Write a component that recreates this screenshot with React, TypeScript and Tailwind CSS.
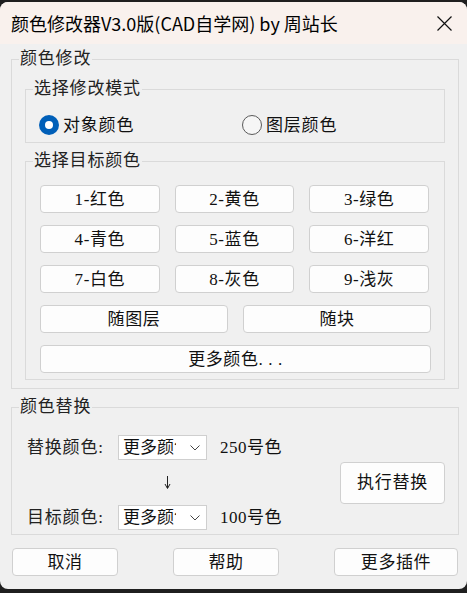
import React from 'react';

const body = "font-['Liberation_Serif','Noto_Sans_CJK_SC',serif]";

const Btn: React.FC<{ label: string; className?: string }> = ({ label, className = '' }) => (
  <button
    className={`h-[28px] rounded-[4px] border border-[#d0d0d0] bg-[#fdfdfd] text-[17px] leading-none tracking-[0.6px] text-[#111] ${className}`}
  >
    {label}
  </button>
);

const Radio: React.FC<{ checked?: boolean; label: string }> = ({ checked, label }) => (
  <label className="flex items-center gap-[4px] text-[17px] leading-none tracking-[0.8px] text-[#111]">
    {checked ? (
      <span className="flex h-[20px] w-[20px] items-center justify-center rounded-full bg-[#005fb8]">
        <span className="h-[8px] w-[8px] rounded-full bg-white" />
      </span>
    ) : (
      <span className="h-[20px] w-[20px] rounded-full border border-[#5a5a5a] bg-[#f6f6f6]" />
    )}
    {label}
  </label>
);

const Select: React.FC = () => (
  <div className="flex h-[25px] w-[89px] items-center border border-[#cfcfcf] bg-white pl-[4px]">
    <span className="w-[53px] overflow-hidden whitespace-nowrap text-[17px] leading-none text-[#111]">更多颜色</span>
    <svg width="10" height="6" viewBox="0 0 10 6" className="ml-[14px]">
      <path d="M0.5 0.5 L5 5 L9.5 0.5" fill="none" stroke="#444" strokeWidth="1" />
    </svg>
  </div>
);

const Legend: React.FC<{ text: string }> = ({ text }) => (
  <legend className="ml-[7px] px-[1px] text-[17px] leading-[22px] tracking-[0.8px] text-[#222]">{text}</legend>
);

export default function App() {
  const colors = ['1-红色', '2-黄色', '3-绿色', '4-青色', '5-蓝色', '6-洋红', '7-白色', '8-灰色', '9-浅灰'];
  return (
    <div className="h-[593px] w-[467px] bg-[#1f1f1f] pt-[2px] pb-[4px]">
      <div className={`flex h-full flex-col overflow-hidden rounded-[8px] bg-[#f0f0f0] ${body}`}>
        {/* title bar */}
        <div className="flex h-[42px] shrink-0 items-center justify-between bg-[#f9f1ed] pl-[11px] pr-[15px]">
          <span className="font-['Noto_Sans_CJK_SC',sans-serif] text-[18px] text-black">
            颜色修改器V3.0版(CAD自学网) by 周站长
          </span>
          <svg width="15" height="15" viewBox="0 0 15 15">
            <path d="M0.5 0.5 L14.5 14.5 M14.5 0.5 L0.5 14.5" stroke="#111" strokeWidth="1.2" />
          </svg>
        </div>

        <div className="flex flex-col pl-[11px] pr-[8px]">
          {/* 颜色修改 */}
          <fieldset className="mt-[4px] border border-[#dadada] pb-[8px]">
            <Legend text="颜色修改" />
            <div className="px-[13px]">
              <fieldset className="mt-[8px] border border-[#dadada]">
                <Legend text="选择修改模式" />
                <div className="mt-[13px] mb-[5px] flex h-[24px] items-center pl-[13px]">
                  <div className="w-[203px]">
                    <Radio checked label="对象颜色" />
                  </div>
                  <Radio label="图层颜色" />
                </div>
              </fieldset>
              <fieldset className="mt-[7px] border border-[#dadada] pb-[6px]">
                <Legend text="选择目标颜色" />
                <div className="pl-[14px] pr-[13px]">
                  <div className="mt-[13px] grid grid-cols-3 gap-x-[15px] gap-y-[12px] pr-[2px]">
                    {colors.map(c => (
                      <Btn key={c} label={c} />
                    ))}
                  </div>
                  <div className="mt-[12px] grid grid-cols-2 gap-x-[15px]">
                    <Btn label="随图层" />
                    <Btn label="随块" />
                  </div>
                  <Btn label="更多颜色. . ." className="mt-[12px] w-full" />
                </div>
              </fieldset>
            </div>
          </fieldset>

          {/* 颜色替换 */}
          <fieldset className="mt-[7px] border border-[#dadada] pb-[4px]">
            <Legend text="颜色替换" />
            <div className="mt-[17px] flex items-center justify-between pl-[15px] pr-[13px]">
              <div className="flex flex-col">
                <div className="flex h-[25px] items-center">
                  <span className="w-[91px] text-[17px] leading-none tracking-[0.8px] text-[#222]">替换颜色:</span>
                  <Select />
                  <span className="ml-[13px] text-[17px] leading-none tracking-[0.5px] text-[#111]">250号色</span>
                </div>
                <div className="flex h-[45px] items-center pl-[137px]">
                  <svg width="7" height="13" viewBox="0 0 7 13">
                    <path d="M3.5 0 L3.5 12" stroke="#222" strokeWidth="1" />
                    <path d="M1 8 L3.5 12.5 L6 8" fill="none" stroke="#222" strokeWidth="1" />
                  </svg>
                </div>
                <div className="flex h-[25px] items-center">
                  <span className="w-[91px] text-[17px] leading-none tracking-[0.8px] text-[#222]">目标颜色:</span>
                  <Select />
                  <span className="ml-[13px] text-[17px] leading-none tracking-[0.5px] text-[#111]">100号色</span>
                </div>
              </div>
              <button className="h-[42px] w-[105px] rounded-[4px] border border-[#d0d0d0] bg-[#fdfdfd] text-[17px] leading-none tracking-[0.8px] text-[#111]">
                执行替换
              </button>
            </div>
          </fieldset>

          <div className="mt-[13px] flex justify-between pl-[1px] pr-[1px]">
            <Btn label="取消" className="w-[106px]" />
            <Btn label="帮助" className="w-[106px]" />
            <Btn label="更多插件" className="w-[124px]" />
          </div>
        </div>
      </div>
    </div>
  );
}
